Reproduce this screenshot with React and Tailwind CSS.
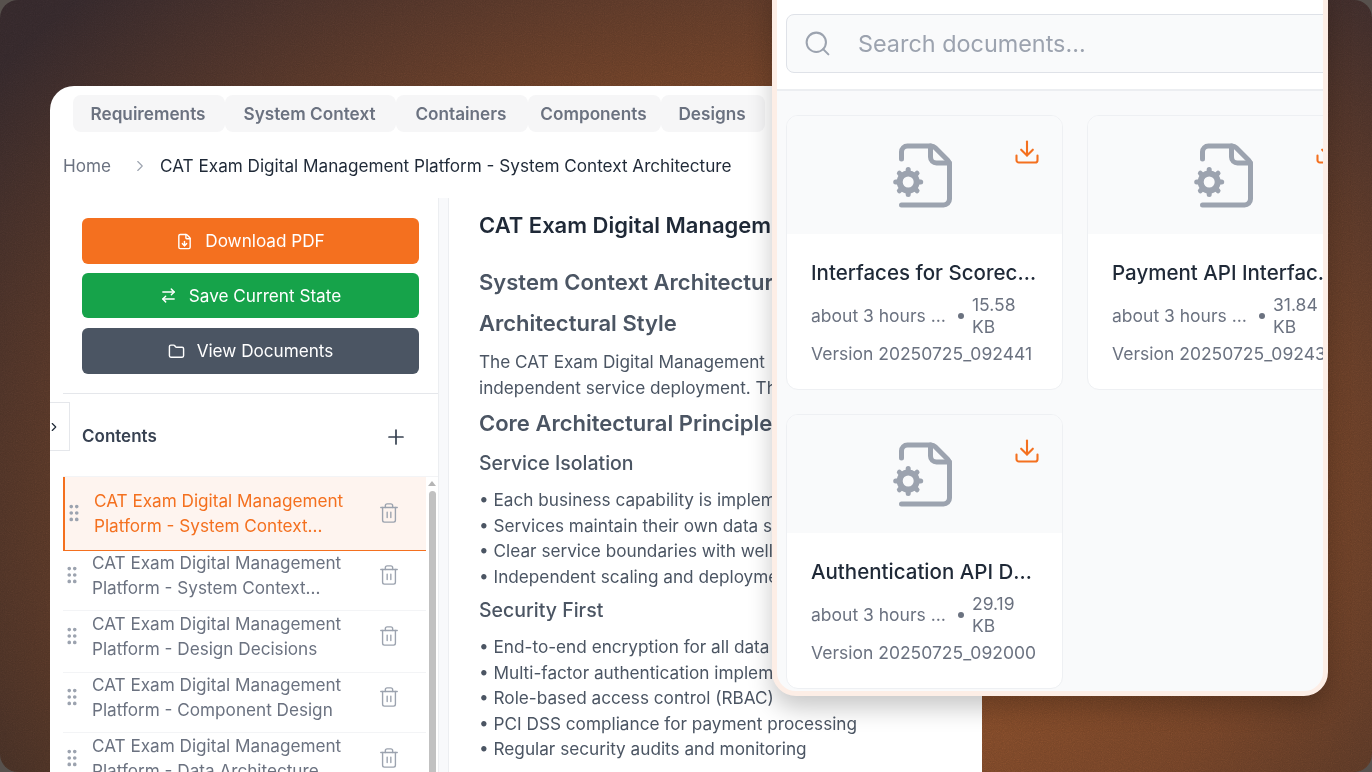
import React from 'react';
import { ArrowRightLeft, ChevronRight, Download, FileDown, Folder, GripVertical, Plus, Search, Trash2 } from 'lucide-react';

const tabs = [
  { label: 'Requirements', w: 'w-[152px]' },
  { label: 'System Context', w: 'w-[171px]' },
  { label: 'Containers', w: 'w-[132px]' },
  { label: 'Components', w: 'w-[133px]' },
  { label: 'Designs', w: 'w-[104px]' },
];

const contents = [
  { title: 'Platform - Design Decisions', h: 'h-[62px]' },
  { title: 'Platform - Component Design', h: 'h-[60px]' },
  { title: 'Platform - Data Architecture', h: 'h-[62px]' },
];

const isolation = [
  'Each business capability is implemented as a service',
  'Services maintain their own data stores',
  'Clear service boundaries with well-defined APIs',
  'Independent scaling and deployment',
];

const security = [
  'End-to-end encryption for all data',
  'Multi-factor authentication implemented',
  'Role-based access control (RBAC)',
  'PCI DSS compliance for payment processing',
  'Regular security audits and monitoring',
];

const docs = [
  { title: 'Interfaces for Scorecard API', size: '15.58', version: '20250725_092441' },
  { title: 'Payment API Interface Design', size: '31.84', version: '20250725_092431' },
  { title: 'Authentication API Design', size: '29.19', version: '20250725_092000' },
];

const teeth = [0, 45, 90, 135, 180, 225, 270, 315];

// file with a solid cog at the lower left, lucide's FileCog has a thinner cog
const FileGear = () => (
  <svg viewBox="0 0 72 72" className="w-[72px] h-[72px] text-[#9ca3af]" fill="none" stroke="currentColor" strokeLinecap="round" strokeLinejoin="round">
    <g strokeWidth="5">
      <path d="M12.5 20V13a6 6 0 0 1 6-6H42a6 6 0 0 1 4.2 1.8L58.7 21.3a6 6 0 0 1 1.8 4.2V60a6 6 0 0 1-6 6H12.5" />
      <path d="M41.5 7V18a6 6 0 0 0 6 6H60.5" />
    </g>
    <circle cx="19.2" cy="43" r="8.5" strokeWidth="6" />
    {teeth.map((a) => (
      <line key={a} x1="19.2" y1="33" x2="19.2" y2="30.5" strokeWidth="5" transform={`rotate(${a} 19.2 43)`} />
    ))}
  </svg>
);

const SideButton = ({ icon: Icon, label, color, h }) => (
  <button type="button" className={`${color} ${h} w-full rounded-md flex items-center justify-center gap-3 text-white text-[17.15px]`}>
    <Icon className="w-[17px] h-[17px]" />
    {label}
  </button>
);

const ContentItem = ({ title, h }) => (
  <div className={`${h} flex items-center border-b border-[#f3f4f6] pb-[11px] text-[#6b7280]`}>
    <GripVertical className="-ml-[2px] w-[22px] h-[22px] text-[#9ca3af] shrink-0" />
    <div className="ml-[9px] w-[272px] text-[17.15px] leading-[25px] whitespace-nowrap">
      <div>CAT Exam Digital Management</div>
      <div>{title}</div>
    </div>
    <Trash2 className="ml-[14px] w-[22px] h-[22px] text-[#9ca3af]" strokeWidth={1.5} />
  </div>
);

const DocCard = ({ title, size, version }) => (
  <div className="w-[277px] h-[275px] shrink-0 rounded-xl border border-[#eef0f3] bg-white overflow-hidden relative">
    <div className="h-[118px] bg-[#f9fafb] flex items-center justify-center">
      <FileGear />
    </div>
    <Download className="absolute top-[22px] right-[21px] w-[28px] h-[28px] text-[#f4701f]" strokeWidth={1.8} />
    <div className="pl-[24px] pr-[24px] pt-[24px]">
      <div className="text-[20.5px] leading-[30px] font-medium text-[#1f2937] truncate">{title}</div>
      <div className="mt-[6px] flex items-center text-[#6b7280] text-[17.5px] leading-[21.5px]">
        <span className="w-[136px] truncate shrink-0">about 3 hours ago</span>
        <span className="ml-[11px] mr-[8px] w-[6px] h-[6px] rounded-full bg-[#6b7280] shrink-0" />
        <span className="w-[50px]">{size} KB</span>
      </div>
      <div className="mt-[5px] text-[#6b7280] text-[17.5px] leading-[24px] whitespace-nowrap">Version {version}</div>
    </div>
  </div>
);

export default function App() {
  return (
    <div className="w-[1372px] h-[772px] overflow-hidden bg-[#57514d] font-[Inter,sans-serif]">
      <div className="relative w-full h-full overflow-hidden rounded-[18px] pt-[86px] pl-[50px] bg-[radial-gradient(ellipse_70%_95%_at_56%_66%,#96552b_0%,#6e4026_55%,#33272300_100%),linear-gradient(#33272a,#332723)]">
        {/* grain over the backdrop */}
        <svg className="absolute inset-0 w-full h-full opacity-30 mix-blend-overlay" aria-hidden="true">
          <filter id="grain">
            <feTurbulence type="fractalNoise" baseFrequency="0.9" numOctaves="2" stitchTiles="stitch" />
            <feColorMatrix type="saturate" values="0" />
          </filter>
          <rect width="100%" height="100%" filter="url(#grain)" />
        </svg>

        {/* main window */}
        <div className="relative w-[932px] h-[686px] rounded-tl-[24px] bg-white overflow-hidden">
          <div className="flex pt-[9px] pl-[23px] h-[46px]">
            {tabs.map((t) => (
              <div key={t.label} className={`${t.w} h-[37px] shrink-0 rounded-lg bg-[#f6f6f7] flex items-center justify-center pr-[2px] text-[17.2px] font-semibold text-[#6b7280]`}>
                {t.label}
              </div>
            ))}
          </div>

          <div className="h-[66px] pt-[1px] flex items-center pl-[13px] text-[17.15px]">
            <span className="text-[#6b7280]">Home</span>
            <ChevronRight className="ml-[20px] mr-[11px] w-[18px] h-[18px] text-[#9ca3af]" strokeWidth={1.5} />
            <span className="text-[#1f2937]">CAT Exam Digital Management Platform - System Context Architecture</span>
          </div>

          <div className="flex h-[574px]">
            <aside className="w-[389px] shrink-0 pl-[13px] border-r border-[#eceef1] relative">
              <div className="px-[19px] pt-[20px] pb-[19px] border-b border-[#e5e7eb] flex flex-col">
                <SideButton icon={FileDown} label="Download PDF" color="bg-[#f4701f]" h="h-[46px]" />
                <div className="h-[9px] shrink-0" />
                <SideButton icon={ArrowRightLeft} label="Save Current State" color="bg-[#16a34a]" h="h-[45px]" />
                <div className="h-[10px] shrink-0" />
                <SideButton icon={Folder} label="View Documents" color="bg-[#4b5563]" h="h-[46px]" />
              </div>

              <button type="button" className="absolute left-0 top-[204px] w-[20px] h-[49px] bg-white border border-l-0 border-[#e5e7eb] flex items-center justify-start">
                <ChevronRight className="w-[14px] h-[14px] text-[#1f2937] -ml-[3px]" />
              </button>

              <div className="h-[83px] pl-[19px] pr-[30px] pt-[3px] flex items-center justify-between border-b border-[#f3f4f6]">
                <span className="text-[17px] font-semibold text-[#374151]">Contents</span>
                <Plus className="w-[24px] h-[24px] text-[#374151]" strokeWidth={1.7} />
              </div>

              <div className="flex">
                <div className="w-[363px] shrink-0">
                  <div className="h-[74px] pb-[1px] flex items-center bg-[#fef4ef] border-l-2 border-b border-[#f4701f] text-[#f4701f]">
                    <GripVertical className="-ml-[2px] w-[22px] h-[22px] text-[#9ca3af] shrink-0" />
                    <div className="ml-[9px] w-[272px] text-[17.15px] leading-[25px] whitespace-nowrap">
                      <div>CAT Exam Digital Management</div>
                      <div>Platform - System Context...</div>
                    </div>
                    <Trash2 className="ml-[12px] w-[22px] h-[22px] text-[#9ca3af]" strokeWidth={1.5} />
                  </div>
                  <ContentItem title="Platform - System Context..." h="h-[60px]" />
                  {contents.map((c) => (
                    <ContentItem key={c.title} title={c.title} h={c.h} />
                  ))}
                </div>
                <div className="w-[12px] flex flex-col items-center pt-[4px]">
                  <div className="w-0 h-0 border-x-[4px] border-x-transparent border-b-[5px] border-b-[#b5b5b5]" />
                  <div className="mt-[5px] w-[7px] h-[400px] rounded-full bg-[#c1c1c1]" />
                </div>
              </div>
            </aside>

            <div className="w-[10px] shrink-0 bg-[#f8f9fb] border-r border-[#eceef1]" />

            <main className="pl-[30px] pt-[13px] whitespace-nowrap text-[#4b5563]">
              <h1 className="text-[22px] leading-[28px] font-semibold text-[#1f2937]">CAT Exam Digital Management Platform</h1>
              <h2 className="mt-[29px] text-[22px] leading-[28px] font-semibold">System Context Architecture</h2>
              <h3 className="mt-[13px] text-[22px] leading-[28px] font-semibold">Architectural Style</h3>
              <p className="mt-[12px] text-[17.2px] leading-[25.5px]">The CAT Exam Digital Management</p>
              <p className="text-[17.2px] leading-[25.5px]">independent service deployment. The platform follows</p>
              <h3 className="mt-[9px] text-[22px] leading-[28px] font-semibold">Core Architectural Principles</h3>
              <h4 className="mt-[13px] text-[19.5px] leading-[26px] font-medium">Service Isolation</h4>
              <ul className="mt-[11px] text-[17.2px] leading-[25.5px]">
                {isolation.map((b) => <li key={b}>• {b}</li>)}
              </ul>
              <h4 className="mt-[8px] text-[19.5px] leading-[26px] font-medium">Security First</h4>
              <ul className="mt-[11px] text-[17.2px] leading-[25.5px]">
                {security.map((b) => <li key={b}>• {b}</li>)}
              </ul>
            </main>
          </div>
        </div>

        {/* documents panel */}
        <div className="absolute left-[772px] top-[-20px] w-[556px] h-[716px] rounded-b-[24px] border-[5px] border-[#fdeee6] bg-[#f9fafb] overflow-hidden shadow-[0_12px_24px_rgba(0,0,0,0.22)]">
          <div className="h-[106px] pt-[29px] pl-[9px] bg-white border-b-2 border-[#eceef1]">
            <div className="w-[560px] h-[59px] rounded-lg border border-[#dfe2e8] bg-[#f9fafb] flex items-center pl-[16px]">
              <Search className="w-[29px] h-[29px] text-[#9ca3af]" strokeWidth={1.7} />
              <span className="ml-[26px] text-[23.4px] text-[#9ca3af]">Search documents...</span>
            </div>
          </div>
          <div className="pl-[9px] pt-[24px] flex flex-wrap gap-x-[24px] gap-y-[24px] w-[600px]">
            {docs.map((d) => (
              <DocCard key={d.title} {...d} />
            ))}
          </div>
        </div>
      </div>
    </div>
  );
}
